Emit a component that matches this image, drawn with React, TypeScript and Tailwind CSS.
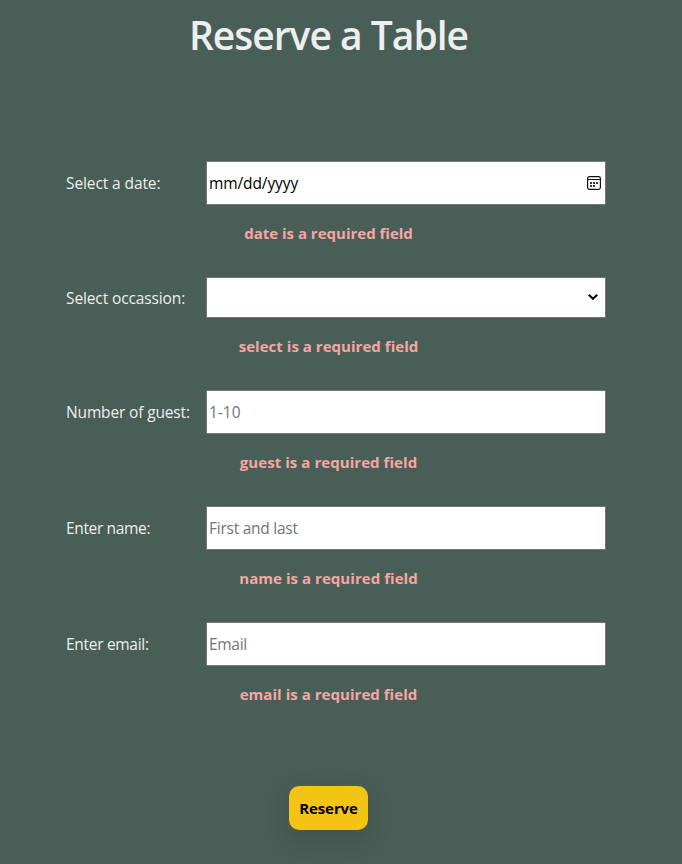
import React from "react";

type Field = {
  id: string;
  label: string;
  labelClass: string;
  error: string;
  errorClass: string;
  control: React.ReactNode;
};

const box =
  "flex w-[400px] items-center justify-between border border-[#767676] bg-white pl-[2px]";

function CalendarIcon() {
  return (
    <svg width="14" height="14" viewBox="0 0 14 14" className="mr-1 shrink-0" fill="none">
      <rect x="0.6" y="0.6" width="12.8" height="12.8" rx="1.8" stroke="#101010" strokeWidth="1.2" />
      <path d="M0.5 3.5H13.5" stroke="#101010" />
      <path d="M3 6h2v2H3zM6 6h2v2H6zM9 6h2v2H9zM3 9h2v2H3zM6 9h2v2H6z" fill="#3c3c3c" />
    </svg>
  );
}

function ChevronIcon() {
  return (
    <svg width="10" height="6" viewBox="0 0 10 6" className="mr-[7px] mb-px shrink-0" fill="none">
      <path d="M0.8 0.8L5 4.8L9.2 0.8" stroke="#000" strokeWidth="2" />
    </svg>
  );
}

function Hint({ text, className }: { text: string; className: string }) {
  return (
    <div className={`${box} h-11`}>
      <span className={`whitespace-nowrap text-[#757575] ${className}`}>{text}</span>
    </div>
  );
}

const fields: Field[] = [
  {
    id: "date",
    label: "Select a date:",
    labelClass: "tracking-[-0.1px]",
    error: "date is a required field",
    errorClass: "tracking-[0px]",
    control: (
      <div className={`${box} h-11`}>
        <span className="text-black tracking-[-0.1px]">mm/dd/yyyy</span>
        <CalendarIcon />
      </div>
    ),
  },
  {
    id: "select",
    label: "Select occassion:",
    labelClass: "tracking-[-0.12px]",
    error: "select is a required field",
    errorClass: "tracking-[0.03px]",
    control: (
      <div className={`${box} h-[41px]`}>
        <span />
        <ChevronIcon />
      </div>
    ),
  },
  {
    id: "guest",
    label: "Number of guest:",
    labelClass: "tracking-[-0.15px]",
    error: "guest is a required field",
    errorClass: "tracking-[0.06px]",
    control: <Hint text="1-10" className="tracking-[0px]" />,
  },
  {
    id: "name",
    label: "Enter name:",
    labelClass: "tracking-[-0.35px]",
    error: "name is a required field",
    errorClass: "tracking-[0.05px]",
    control: <Hint text="First and last" className="tracking-[-0.25px]" />,
  },
  {
    id: "email",
    label: "Enter email:",
    labelClass: "tracking-[-0.3px]",
    error: "email is a required field",
    errorClass: "tracking-[0.04px]",
    control: <Hint text="Email" className="tracking-[-0.3px]" />,
  },
];

export default function App() {
  return (
    <main className="h-[864px] w-full overflow-hidden bg-[#495e57] font-['Open_Sans',sans-serif] text-[15.5px] leading-5 text-[#edefee]">
      <div className="flex w-[657px] flex-col items-center">
        <h1 className="mt-[8px] h-[54px] whitespace-nowrap text-[39px] font-semibold leading-[54px] tracking-[-1px]">
          Reserve a Table
        </h1>
        <form className="mt-[99px] flex w-full flex-col">
          {fields.map((f) => (
            <div key={f.id} className="flex flex-col">
              <div className="flex items-center pl-[66px]">
                <label className={`w-[140px] shrink-0 whitespace-nowrap ${f.labelClass}`}>{f.label}</label>
                {f.control}
              </div>
              <p className="flex h-[72px] justify-center pt-[18px] text-[15px] font-bold text-[#f4a7a3]">
                <span className={`whitespace-nowrap ${f.errorClass}`}>{f.error}</span>
              </p>
            </div>
          ))}
        </form>
        <button
          type="button"
          className="mt-12 flex h-11 w-[79px] items-center justify-center rounded-[10px] bg-[#f4c414] text-[15px] font-bold tracking-[-0.1px] text-black shadow-[0_8px_24px_rgba(0,0,0,0.15)]"
        >
          Reserve
        </button>
      </div>
    </main>
  );
}
